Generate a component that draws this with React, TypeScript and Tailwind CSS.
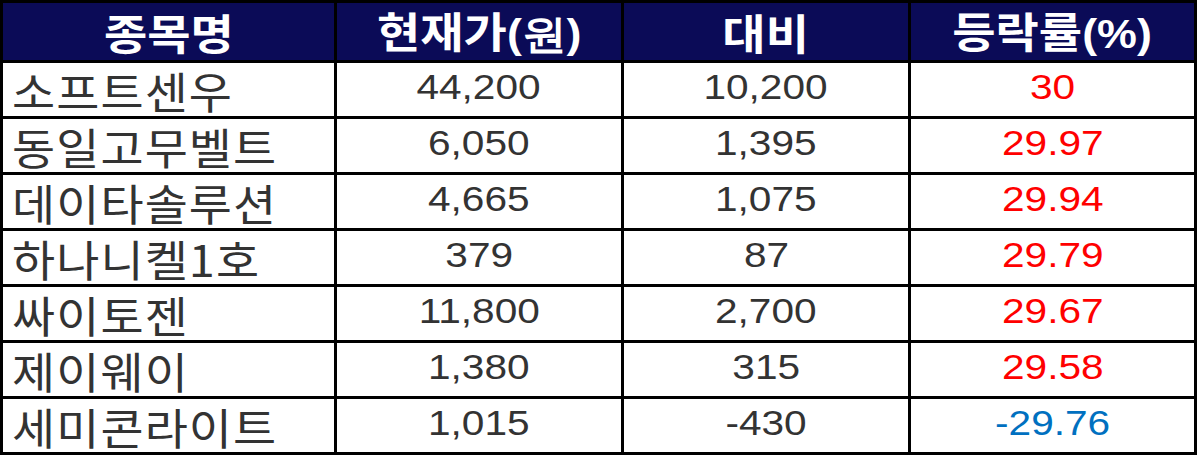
const rows = [
  { name: "소프트센우", price: "44,200", diff: "10,200", rate: "30", up: true },
  { name: "동일고무벨트", price: "6,050", diff: "1,395", rate: "29.97", up: true },
  { name: "데이타솔루션", price: "4,665", diff: "1,075", rate: "29.94", up: true },
  { name: "하나니켈1호", price: "379", diff: "87", rate: "29.79", up: true },
  { name: "싸이토젠", price: "11,800", diff: "2,700", rate: "29.67", up: true },
  { name: "제이웨이", price: "1,380", diff: "315", rate: "29.58", up: true },
  { name: "세미콘라이트", price: "1,015", diff: "-430", rate: "-29.76", up: false },
];

const headers = [
  { ko: "종목명", tail: "" },
  { ko: "현재가", tail: "(원)" },
  { ko: "대비", tail: "" },
  { ko: "등락률", tail: "(%)" },
];

const cell = "border-r-[3px] border-b-[3px] border-black flex items-center";

export default function App() {
  return (
    <div className="w-[1199px] h-[460px] bg-white font-['Liberation_Sans','Noto_Sans_CJK_KR',sans-serif]">
      <div className="w-[1197px] border-l-[3px] border-t-[3px] border-black">
        <div className="grid grid-cols-[334px_287px_287px_286px] bg-[#0b0b57] text-white font-bold leading-none">
          {headers.map((h) => (
            <div key={h.ko} className={`h-[60px] ${cell} justify-center`}>
              <span className="inline-block font-['Noto_Sans_CJK_KR',sans-serif] text-[42px] scale-x-[1.12]">
                {h.ko}
                {h.tail && (
                  <span className="font-['Liberation_Sans',sans-serif] text-[40px]">{h.tail}</span>
                )}
              </span>
            </div>
          ))}
        </div>
        {rows.map((r) => (
          <div
            key={r.name}
            className="grid grid-cols-[334px_287px_287px_286px] leading-none text-[#333333]"
          >
            <div className={`h-[56px] ${cell} pl-[9px]`}>
              <span className="inline-block origin-left font-['Noto_Sans_CJK_KR',sans-serif] text-[43px] tracking-[1px] scale-x-[1.09] translate-y-[1px]">
                {r.name}
              </span>
            </div>
            <div className={`h-[56px] ${cell} justify-center text-[35px]`}>
              <span className="inline-block scale-x-[1.16] -translate-y-[3px]">{r.price}</span>
            </div>
            <div className={`h-[56px] ${cell} justify-center text-[35px]`}>
              <span className="inline-block scale-x-[1.16] -translate-y-[3px]">{r.diff}</span>
            </div>
            <div
              className={`h-[56px] ${cell} justify-center text-[35px] ${
                r.up ? "text-[#ff0000]" : "text-[#0070c0]"
              }`}
            >
              <span className="inline-block scale-x-[1.16] -translate-y-[3px]">{r.rate}</span>
            </div>
          </div>
        ))}
      </div>
    </div>
  );
}
